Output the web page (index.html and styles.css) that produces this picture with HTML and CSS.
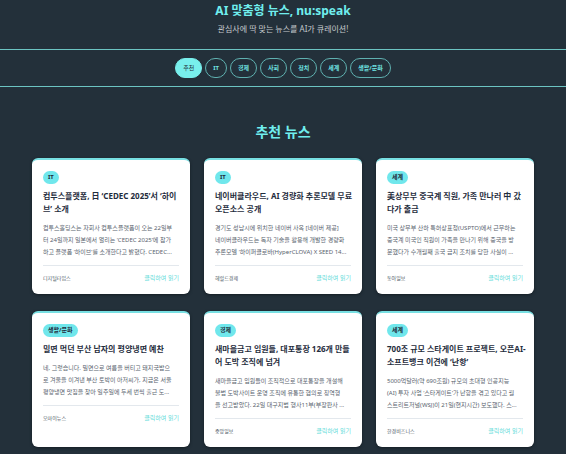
FILE: index.html
```html
<!DOCTYPE html>
<html lang="ko">
<head>
<meta charset="utf-8">
<meta name="viewport" content="width=device-width, initial-scale=1">
<title>nu:speak</title>
<link rel="stylesheet" href="styles.css">
</head>
<body>
<header class="site-header">
  <h1 class="site-title">AI 맞춤형 뉴스, nu:speak</h1>
  <p class="site-tagline">관심사에 딱 맞는 뉴스를 AI가 큐레이션!</p>
</header>
<nav class="categories">
  <button class="category category-active" type="button">추천</button>
  <button class="category" type="button">IT</button>
  <button class="category" type="button">경제</button>
  <button class="category" type="button">사회</button>
  <button class="category" type="button">정치</button>
  <button class="category" type="button">세계</button>
  <button class="category" type="button">생활/문화</button>
</nav>
<main class="content">
  <h2 class="section-title">추천 뉴스</h2>
  <div class="news-grid">
    <article class="card">
      <span class="badge">IT</span>
      <h3 class="card-title">컴투스플랫폼, 日 ‘CEDEC 2025’서 ‘하이<br>브’ 소개</h3>
      <p class="summary">컴투스홀딩스는 자회사 컴투스플랫폼이 오는 22일부<br>터 24일까지 일본에서 열리는 ‘CEDEC 2025’에 참가<br>하고 플랫폼 ‘하이브’를 소개한다고 밝혔다. CEDEC...</p>
      <footer class="card-footer"><span>디지털타임스</span><a class="read-link" href="#">클릭하여 읽기</a></footer>
    </article>
    <article class="card">
      <span class="badge">IT</span>
      <h3 class="card-title">네이버클라우드, AI 경량화 추론모델 무료<br>오픈소스 공개</h3>
      <p class="summary">경기도 성남시에 위치한 네이버 사옥 [네이버 제공]<br>네이버클라우드는 독자 기술을 활용해 개발한 경량화<br>추론모델 ‘하이퍼클로바(HyperCLOVA) X SEED 14...</p>
      <footer class="card-footer"><span>헤럴드경제</span><a class="read-link" href="#">클릭하여 읽기</a></footer>
    </article>
    <article class="card">
      <span class="badge">세계</span>
      <h3 class="card-title">美상무부 중국계 직원, 가족 만나러 中 갔<br>다가 출금</h3>
      <p class="summary">미국 상무부 산하 특허상표청(USPTO)에서 근무하는<br>중국계 미국인 직원이 가족을 만나기 위해 중국을 방<br>문했다가 수개월째 출국 금지 조치를 당한 사실이 ...</p>
      <footer class="card-footer"><span>동아일보</span><a class="read-link" href="#">클릭하여 읽기</a></footer>
    </article>
    <article class="card">
      <span class="badge">생활/문화</span>
      <h3 class="card-title">밀면 먹던 부산 남자의 평양냉면 예찬</h3>
      <p class="summary">네, 그렇습니다. 밀면으로 여름을 버티고 돼지국밥으<br>로 겨울을 이겨낸 부산 토박이 아저씨가, 지금은 서울<br>평양냉면 맛집을 찾아 일주일에 두세 번씩 출근 도...</p>
      <footer class="card-footer"><span>오마이뉴스</span><a class="read-link" href="#">클릭하여 읽기</a></footer>
    </article>
    <article class="card">
      <span class="badge">경제</span>
      <h3 class="card-title">새마을금고 임원들, 대포통장 126개 만들<br>어 도박 조직에 넘겨</h3>
      <p class="summary">새마을금고 임원들이 조직적으로 대포통장을 개설해<br>불법 도박사이트 운영 조직에 유통한 혐의로 징역형<br>을 선고받았다. 22일 대구지법 형사11부(부장판사 ...</p>
      <footer class="card-footer"><span>중앙일보</span><a class="read-link" href="#">클릭하여 읽기</a></footer>
    </article>
    <article class="card">
      <span class="badge">세계</span>
      <h3 class="card-title">700조 규모 스타게이트 프로젝트, 오픈AI-<br>소프트뱅크 이견에 ‘난항’</h3>
      <p class="summary">5000억달러(약 690조원) 규모의 초대형 인공지능<br>(AI) 투자 사업 ‘스타게이트’가 난항을 겪고 있다고 월<br>스트리트저널(WSJ)이 21일(현지시간) 보도했다. 스...</p>
      <footer class="card-footer"><span>한경비즈니스</span><a class="read-link" href="#">클릭하여 읽기</a></footer>
    </article>
  </div>
</main>
</body>
</html>
```
FILE: styles.css
```css
* {
  box-sizing: border-box;
}

body {
  margin: 0;
  background: #23303a;
  color: #1f2d3d;
  font-family: "Noto Sans", "Noto Sans CJK KR", sans-serif;
}

h1, h2, h3, p {
  margin: 0;
}

.site-header {
  padding: 1px 16px 13px;
  text-align: center;
}

.site-title {
  color: #70eeee;
  font-size: 12px;
  line-height: 20px;
}

.site-tagline {
  color: #c3c8cb;
  font-size: 8px;
  line-height: 15px;
}

.categories {
  display: flex;
  flex-wrap: wrap;
  justify-content: center;
  gap: 3px;
  padding: 8px 16px;
  border-top: 1px solid #6cc4c2;
  border-bottom: 1px solid #6cc4c2;
}

.category {
  height: 20px;
  padding: 0 7px;
  border: 1px solid #5fb0b0;
  border-radius: 10px;
  background: transparent;
  color: #70e4e2;
  font: bold 6px/18px "Noto Sans", "Noto Sans CJK KR", sans-serif;
}

.category-active {
  border-color: #78efec;
  background: #78efec;
  color: #23303a;
  font-weight: normal;
}

.content {
  padding: 32px 32px 7px;
}

.section-title {
  margin-bottom: 13px;
  color: #70eeee;
  font-size: 14px;
  line-height: 26px;
  text-align: center;
}

.news-grid {
  display: grid;
  grid-template-columns: repeat(3, 1fr);
  gap: 17px 14px;
}

.card {
  min-width: 0;
  padding: 11px;
  border-top: 2px solid #78dfe2;
  border-radius: 6px;
  background: #fff;
  box-shadow: 0 1px 3px #141d24;
}

.badge {
  display: block;
  width: fit-content;
  margin-bottom: 5px;
  padding: 0 5px;
  border-radius: 7px;
  background: #70e7ec;
  font-size: 6px;
  font-weight: bold;
  line-height: 13px;
}

.card-title {
  margin-bottom: 7px;
  font-size: 8px;
  line-height: 13px;
  white-space: nowrap;
}

.summary {
  margin-bottom: 7px;
  color: #59636e;
  font-size: 6px;
  line-height: 12px;
  white-space: nowrap;
}

.card-footer {
  display: flex;
  justify-content: space-between;
  padding-top: 7px;
  border-top: 1px solid #e3e8ed;
  color: #4d5966;
  font-size: 5px;
  line-height: 10px;
}

.read-link {
  color: #65dcda;
  font-size: 6px;
  text-decoration: none;
}
```
